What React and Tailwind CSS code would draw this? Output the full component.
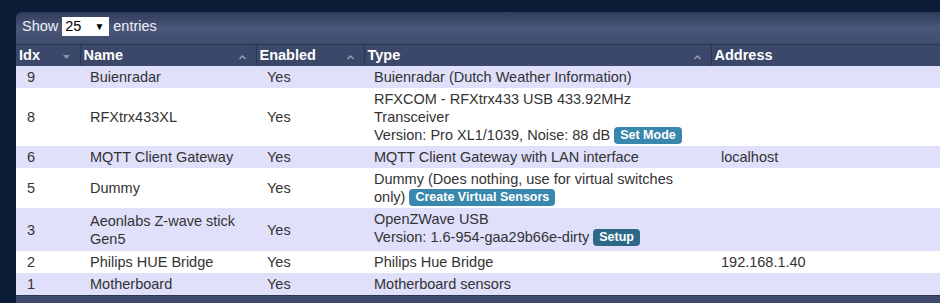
import React from "react";

const rows = [
  { idx: "9", name: "Buienradar", type: ["Buienradar (Dutch Weather Information)"], addr: "" },
  {
    idx: "8",
    name: "RFXtrx433XL",
    type: ["RFXCOM - RFXtrx433 USB 433.92MHz Transceiver", "Version: Pro XL1/1039, Noise: 88 dB"],
    btn: "Set Mode",
    addr: "",
  },
  { idx: "6", name: "MQTT Client Gateway", type: ["MQTT Client Gateway with LAN interface"], addr: "localhost" },
  { idx: "5", name: "Dummy", type: ["Dummy (Does nothing, use for virtual switches only)"], btn: "Create Virtual Sensors", addr: "" },
  { idx: "3", name: "Aeonlabs Z-wave stick Gen5", type: ["OpenZWave USB", "Version: 1.6-954-gaa29b66e-dirty"], btn: "Setup", dark: true, tall: true, addr: "" },
  { idx: "2", name: "Philips HUE Bridge", type: ["Philips Hue Bridge"], addr: "192.168.1.40" },
  { idx: "1", name: "Motherboard", type: ["Motherboard sensors"], addr: "" },
];

function Caret({ down }) {
  return (
    <svg width="9" height="6" viewBox="0 0 9 6" className="absolute right-[9px] top-[9px]">
      {down ? <path d="M1 1h7L4.5 5z" fill="#8a93a8" /> : <path d="M1.5 5L4.5 2 7.5 5" stroke="#9aa2b5" strokeWidth="1.4" fill="none" />}
    </svg>
  );
}

function Btn({ label, dark }) {
  return (
    <span className={`inline-block align-top mt-[1px] ml-[4px] px-[6px] rounded-[4px] text-white font-bold text-[12.5px] leading-[17px] ${dark ? "bg-[#2d6987]" : "bg-[#3a87ad]"}`}>
      {label}
    </span>
  );
}

export default function App() {
  return (
    <div className="w-[940px] h-[303px] overflow-hidden bg-[#0e1d37] pt-[12px] pl-[16px]" style={{ fontFamily: '"Liberation Sans", Arial, sans-serif' }}>
      <div className="rounded-tl-[6px] overflow-hidden w-[940px]">
        <div className="h-[33px] bg-gradient-to-b from-[#2f3c5b] via-[#4a5779] to-[#3f4c6d] flex items-center pb-[3px] pl-[6px] text-[14.5px] text-[#eef0f6] border-b border-[#2a3550]">
          <span>Show</span>
          <span className="ml-[4px] mr-[4px] w-[47px] h-[19px] bg-white text-black flex items-center justify-between px-[3px] text-[14.5px]">
            <span>25</span>
            <span className="text-[10px] pr-[2px]">▼</span>
          </span>
          <span>entries</span>
        </div>
        <table className="table-fixed border-collapse w-[924px] text-[14.5px] text-[#333]">
          <colgroup>
            <col className="w-[64px]" />
            <col className="w-[176px]" />
            <col className="w-[108px]" />
            <col className="w-[347px]" />
            <col className="w-[229px]" />
          </colgroup>
          <thead>
            <tr className="h-[21px] bg-[#3c4869] text-white font-bold text-left">
              {[["Idx", "down"], ["Name", "up"], ["Enabled", "up"], ["Type", "up"], ["Address", null]].map(([h, c], i) => (
                <th key={h} className={`relative px-[3px] py-0 leading-[21px] font-bold ${i > 0 ? "border-l border-[#2c3752]" : ""}`}>
                  {h}
                  {c && <Caret down={c === "down"} />}
                </th>
              ))}
            </tr>
          </thead>
          <tbody>
            {rows.map((r, i) => (
              <tr key={r.idx} className={i % 2 === 0 ? "bg-[#e0e0fb]" : "bg-white"}>
                <td className="pl-[11px] py-[2px] leading-[18px] align-middle">{r.idx}</td>
                <td className="pl-[10px] pr-[14px] py-[2px] leading-[18px] align-middle">{r.name}</td>
                <td className="pl-[11px] py-[2px] leading-[18px] align-middle">Yes</td>
                <td className={`pl-[10px] py-[2px] leading-[18px] align-middle ${r.tall ? "pb-[5px]" : ""}`}>
                  <div className="w-[312px]">
                    {r.type.map((t, j) => (
                      <div key={j}>
                        {t}
                        {r.btn && j === r.type.length - 1 && <Btn label={r.btn} dark={r.dark} />}
                      </div>
                    ))}
                  </div>
                </td>
                <td className="pl-[10px] py-[2px] leading-[18px] align-middle">{r.addr}</td>
              </tr>
            ))}
          </tbody>
        </table>
        <div className="h-[20px] bg-[#3f4b6c] border-t border-[#2a3550]" />
      </div>
    </div>
  );
}
